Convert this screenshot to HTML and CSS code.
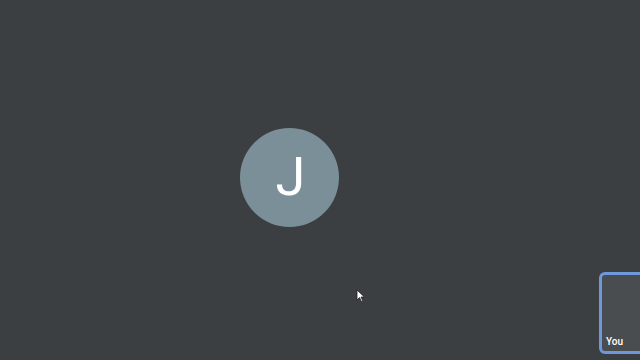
FILE: index.html
```html
<!DOCTYPE html>
<html lang="en">
<head>
    <meta charset="UTF-8">
    <title>Meeting</title>
    <link rel="stylesheet" href="styles.css">
</head>
<body>
    <div class="call">
        <!-- main stage -->
        <main class="stage">
            <div class="avatar">J</div>
        </main>

        <!-- self view -->
        <aside class="side">
            <div class="self-tile">
                <span class="self-name">You</span>
            </div>
        </aside>
    </div>

    <!-- mouse pointer -->
    <svg class="pointer" width="10" height="14" viewBox="0 0 10 14">
        <path d="M1 1 L1 11 L3.5 8.6 L5.4 12.6 L6.9 11.9 L5 8 L8.4 8 Z" fill="#ffffff" stroke="#222" stroke-width="0.8"/>
    </svg>
</body>
</html>
```

FILE: styles.css
```css
/* page */
html, body {
    margin: 0;
    padding: 0;
    height: 100%;
    overflow: hidden;
}

body {
    background-color: #3b3f42;
    font-family: Roboto, "Liberation Sans", sans-serif;
    color: #ffffff;
}

.call {
    display: flex;
    height: 360px;
}

/* main stage */
.stage {
    flex: 0 0 578px;
    height: 355px;
    display: flex;
    align-items: center;
    justify-content: center;
}

.avatar {
    width: 99px;
    height: 99px;
    border-radius: 50%;
    background-color: #7a8f98;
    display: flex;
    align-items: center;
    justify-content: center;
    font-size: 54px;
    line-height: 1;
    padding: 0 0 1px 3px;
    box-sizing: border-box;
}

/* self view */
.side {
    flex: 1;
    display: flex;
    align-items: flex-end;
    padding: 0 0 6px 21px;
}

.self-tile {
    position: relative;
    width: 50px;
    height: 76px;
    flex-shrink: 0;
    background-color: #4a4d50;
    border: 3px solid #6f98dc;
    border-radius: 6px;
}

.self-name {
    position: absolute;
    left: 4px;
    bottom: 4px;
    font-size: 10px;
    font-weight: 500;
}

.pointer {
    position: absolute;
    left: 356px;
    top: 289px;
}
```
